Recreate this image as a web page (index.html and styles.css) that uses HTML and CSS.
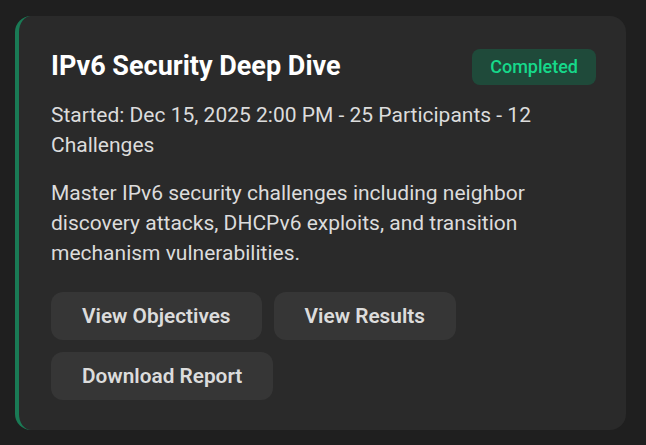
FILE: index.html
```html
<!DOCTYPE html>
<html lang="en">
<head>
    <meta charset="UTF-8">
    <meta name="viewport" content="width=device-width, initial-scale=1.0">
    <title>IPv6 Security Deep Dive</title>
    <link rel="stylesheet" href="styles.css">
</head>
<body>
    <div class="card">
        <div class="card-header">
            <h2 class="card-title">IPv6 Security Deep Dive</h2>
            <span class="badge">Completed</span>
        </div>
        <p class="meta">Started: Dec 15, 2025 2:00 PM - 25 Participants - 12 Challenges</p>
        <p class="desc">Master IPv6 security challenges including neighbor discovery attacks, DHCPv6 exploits, and transition mechanism vulnerabilities.</p>
        <div class="actions">
            <button type="button">View Objectives</button>
            <button type="button">View Results</button>
            <button type="button">Download Report</button>
        </div>
    </div>
</body>
</html>
```

FILE: styles.css
```css
body {
    margin: 0;
    padding: 16px 20px 15px 15px;
    font-family: Roboto, "Liberation Sans", sans-serif;
    background: #1f1f1f;
    color: #e0e0e0;
}

.card {
    background: #2a2a2a;
    border-left: 4px solid #1a7a55;
    border-radius: 16px;
    padding: 32px 30px 30px 32px;
}

.card-header {
    display: flex;
    justify-content: space-between;
    align-items: center;
    height: 36px;
}

.card-title {
    margin: 0;
    font-size: 27px;
    font-weight: 700;
    line-height: 36px;
    color: #fff;
}

.badge {
    background: #1f4a3a;
    color: #16d98a;
    font-size: 18px;
    font-weight: 500;
    padding: 0 18px;
    border-radius: 8px;
    line-height: 36px;
    margin-top: 2px;
}

.meta {
    margin: 16px 0 0;
    font-size: 21px;
    line-height: 30px;
    color: #dcdcdc;
}

.desc {
    margin: 18px 0 0;
    font-size: 21px;
    line-height: 30px;
    color: #dcdcdc;
}

.actions {
    display: flex;
    flex-wrap: wrap;
    gap: 12px;
    margin-top: 24px;
}

button {
    background: #363636;
    color: #dcdcdc;
    border: none;
    border-radius: 12px;
    padding: 0 31px;
    height: 48px;
    font-family: inherit;
    font-size: 20.8px;
    font-weight: 600;
    cursor: pointer;
}

button:hover {
    background: #404040;
}
```
